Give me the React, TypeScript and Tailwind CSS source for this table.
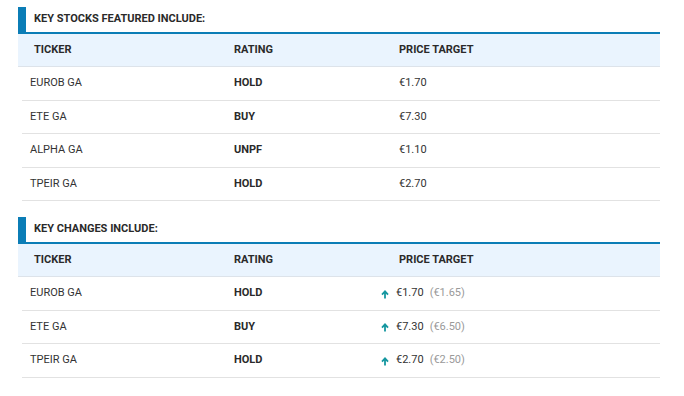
type Row = { ticker: string; rating: string; price: string; prev?: string };

const featured: Row[] = [
  { ticker: "EUROB GA", rating: "HOLD", price: "€1.70" },
  { ticker: "ETE GA", rating: "BUY", price: "€7.30" },
  { ticker: "ALPHA GA", rating: "UNPF", price: "€1.10" },
  { ticker: "TPEIR GA", rating: "HOLD", price: "€2.70" },
];

const changes: Row[] = [
  { ticker: "EUROB GA", rating: "HOLD", price: "€1.70", prev: "(€1.65)" },
  { ticker: "ETE GA", rating: "BUY", price: "€7.30", prev: "(€6.50)" },
  { ticker: "TPEIR GA", rating: "HOLD", price: "€2.70", prev: "(€2.50)" },
];

function UpArrow() {
  return (
    <svg width="8" height="9" viewBox="0 0 8 9" className="mt-[2px]">
      <path d="M4 8.6V2M1 4.6 4 1.4l3 3.2" stroke="#1597a0" strokeWidth="1.8" fill="none" />
    </svg>
  );
}

function Section({ title, rows }: { title: string; rows: Row[] }) {
  return (
    <div className="ml-[18px] w-[642px]">
      <div className="flex">
        <div className="w-[8px] bg-[#0b7db6]" />
        <div className="flex h-[27px] flex-1 items-center border-b-2 border-[#0b7db6] pl-[8px] text-[11px] font-bold text-[#2a2a2a]">
          {title}
        </div>
      </div>
      <div className="flex h-[33px] items-center border-b border-[#dde3ea] bg-[#eaf4fe] text-[11px] font-bold text-[#2a2a2a]">
        <div className="w-[216px] pl-[16px]">TICKER</div>
        <div className="w-[165px]">RATING</div>
        <div>PRICE TARGET</div>
      </div>
      <div className="ml-[4px]">
        {rows.map((r) => (
          <div
            key={r.ticker}
            className="flex h-[33.5px] items-center border-b border-[#e2e2e2] text-[11px] text-[#333]"
          >
            <div className="w-[212px] pl-[8px]">{r.ticker}</div>
            <div className={r.prev ? "w-[162px] font-bold text-[#2a2a2a]" : "w-[165px] font-bold text-[#2a2a2a]"}>
              {r.rating}
            </div>
            <div className="flex items-center">
              {r.prev && (
                <span className="-ml-[15px] flex w-[15px] justify-start">
                  <UpArrow />
                </span>
              )}
              <span>{r.price}</span>
              {r.prev && <span className="ml-[6px] text-[#9a9a9a]">{r.prev}</span>}
            </div>
          </div>
        ))}
      </div>
    </div>
  );
}

export default function App() {
  return (
    <div className="h-[396px] w-[684px] bg-white pt-[7px] font-['Roboto',sans-serif]">
      <Section title="KEY STOCKS FEATURED INCLUDE:" rows={featured} />
      <div className="h-[16px]" />
      <Section title="KEY CHANGES INCLUDE:" rows={changes} />
    </div>
  );
}
